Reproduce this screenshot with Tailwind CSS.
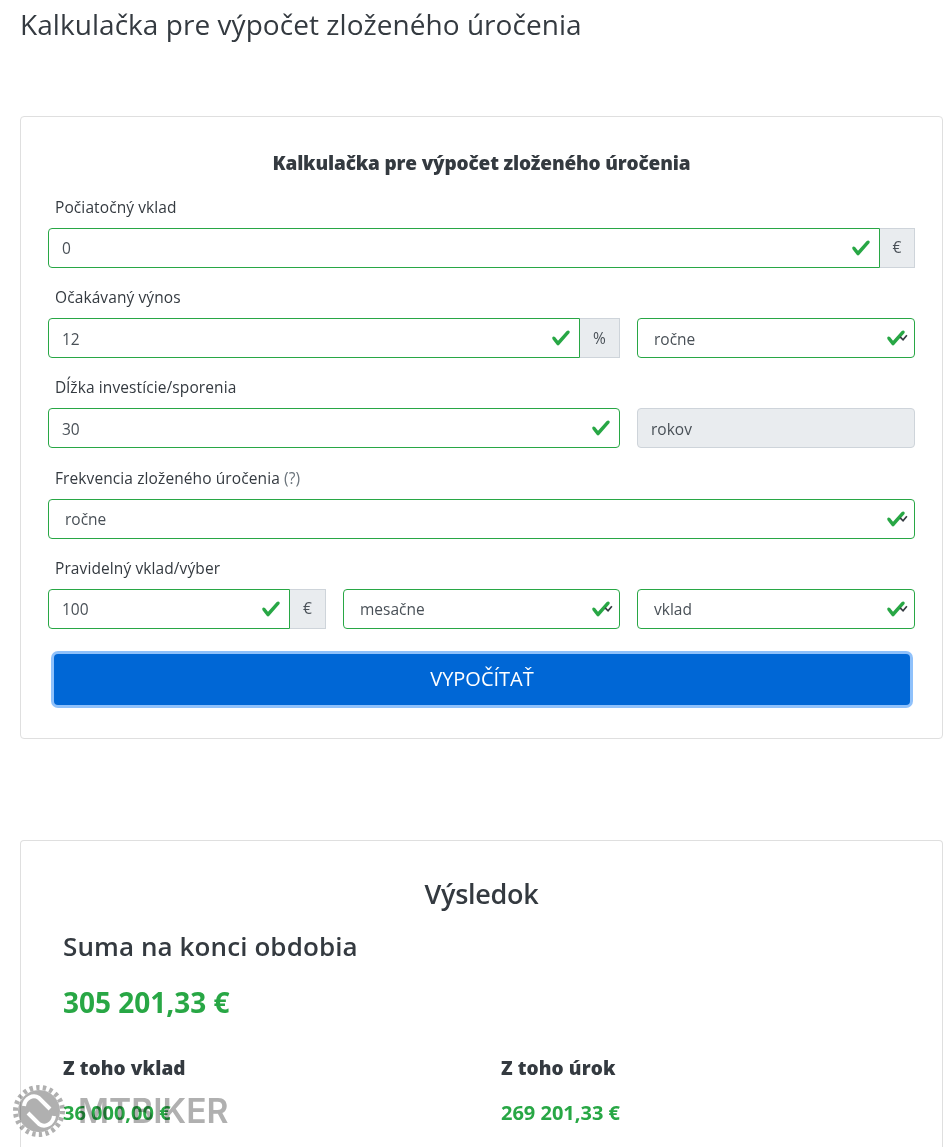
<!DOCTYPE html>
<html lang="sk">
<head>
  <meta charset="UTF-8">
  <meta name="viewport" content="width=device-width, initial-scale=1.0">
  <title>Kalkulačka pre výpočet zloženého úročenia</title>
  <script src="https://cdn.jsdelivr.net/npm/@tailwindcss/browser@4"></script>
</head>
<body class="relative h-[1148px] overflow-hidden bg-white pl-[20px] pr-px font-['Open_Sans','Noto_Sans',sans-serif] text-[#343a40]">
  <svg class="hidden">
    <symbol id="check" viewBox="0 0 8 8"><path fill="#28a745" d="M2.3 6.73L.6 4.53c-.4-1.04.46-1.4 1.1-.8l1.1 1.4 3.4-3.8c.6-.63 1.6-.27 1.2.7l-4 4.6c-.43.5-.8.4-1.1.1z"/></symbol>
    <symbol id="caret" viewBox="0 0 8 6"><path fill="none" stroke="#343a40" stroke-width="1.5" d="M1 2.5l2.6 2.5L7 1"/></symbol>
  </svg>

  <h1 class="h-[116px] pt-[4px] text-[28px] leading-[40px] font-normal tracking-[0.05px]">Kalkulačka pre výpočet zloženého úročenia</h1>

  <!-- formular -->
  <section class="h-[623px] rounded border border-[#dfdfdf] px-[27px] pt-[32px]">
    <h2 class="text-center text-[19px] leading-[28.75px] font-extrabold tracking-[-0.17px]">Kalkulačka pre výpočet zloženého úročenia</h2>

    <div class="flex h-[50.2px] items-end pb-[9px] pl-[7px] text-[15.5px] leading-[24px] tracking-[0.1px]">Počiatočný vklad</div>
    <div class="flex h-[40px]">
      <div class="flex flex-1 items-center justify-between rounded-l border border-[#28a745] pr-[8px] pl-[13px] text-[15.5px] text-[#495057]">
        <span class="pt-[2px]">0</span>
        <svg class="h-[20px] w-[20px]"><use href="#check"/></svg>
      </div>
      <div class="flex w-[35px] items-center justify-center border border-l-0 border-[#ced4da] bg-[#e9ecef] text-[15.5px] text-[#495057]">€</div>
    </div>

    <div class="flex h-[50.2px] items-end pb-[9px] pl-[7px] text-[15.5px] leading-[24px] tracking-[0.1px]">Očakávaný výnos</div>
    <div class="grid h-[40px] grid-cols-[572px_278px] gap-x-[17px]">
      <div class="flex">
        <div class="flex flex-1 items-center justify-between rounded-l border border-[#28a745] pr-[8px] pl-[13px] text-[15.5px] text-[#495057]">
          <span class="pt-[2px]">12</span>
          <svg class="h-[20px] w-[20px]"><use href="#check"/></svg>
        </div>
        <div class="flex w-[40px] items-center justify-center border border-l-0 border-[#ced4da] bg-[#e9ecef] text-[15.5px] text-[#495057]">%</div>
      </div>
      <div class="relative flex items-center rounded border border-[#28a745] pl-[16px] text-[15.5px] text-[#495057]">
        <span class="pt-[2px]">ročne</span>
        <svg class="absolute top-[9px] right-[8px] h-[20px] w-[20px]"><use href="#check"/></svg>
        <svg class="absolute top-[15px] right-[6px] h-[7px] w-[9px]"><use href="#caret"/></svg>
      </div>
    </div>

    <div class="flex h-[50.2px] items-end pb-[9px] pl-[7px] text-[15.5px] leading-[24px] tracking-[0.1px]">Dĺžka investície/sporenia</div>
    <div class="grid h-[40px] grid-cols-[572px_278px] gap-x-[17px]">
      <div class="flex items-center justify-between rounded border border-[#28a745] pr-[8px] pl-[13px] text-[15.5px] text-[#495057]">
        <span class="pt-[2px]">30</span>
        <svg class="h-[20px] w-[20px]"><use href="#check"/></svg>
      </div>
      <div class="flex items-center rounded border border-[#ced4da] bg-[#e9ecef] pl-[13px] text-[15.5px] text-[#495057]"><span class="pt-[2px]">rokov</span></div>
    </div>

    <div class="flex h-[50.2px] items-end pb-[9px] pl-[7px] text-[15.5px] leading-[24px] tracking-[0.1px]">Frekvencia zloženého úročenia&nbsp;<span class="text-[#6c757d]">(?)</span></div>
    <div class="relative flex h-[40px] items-center rounded border border-[#28a745] pl-[16px] text-[15.5px] text-[#495057]">
      <span class="pt-[2px]">ročne</span>
      <svg class="absolute top-[9px] right-[8px] h-[20px] w-[20px]"><use href="#check"/></svg>
      <svg class="absolute top-[15px] right-[6px] h-[7px] w-[9px]"><use href="#caret"/></svg>
    </div>

    <div class="flex h-[50.2px] items-end pb-[9px] pl-[7px] text-[15.5px] leading-[24px] tracking-[0.1px]">Pravidelný vklad/výber</div>
    <div class="grid h-[40px] grid-cols-[278px_277px_278px] gap-x-[17px]">
      <div class="flex">
        <div class="flex flex-1 items-center justify-between rounded-l border border-[#28a745] pr-[8px] pl-[13px] text-[15.5px] text-[#495057]">
          <span class="pt-[2px]">100</span>
          <svg class="h-[20px] w-[20px]"><use href="#check"/></svg>
        </div>
        <div class="flex w-[36px] items-center justify-center border border-l-0 border-[#ced4da] bg-[#e9ecef] text-[15.5px] text-[#495057]">€</div>
      </div>
      <div class="relative flex items-center rounded border border-[#28a745] pl-[16px] text-[15.5px] text-[#495057]">
        <span class="pt-[2px]">mesačne</span>
        <svg class="absolute top-[9px] right-[8px] h-[20px] w-[20px]"><use href="#check"/></svg>
        <svg class="absolute top-[15px] right-[6px] h-[7px] w-[9px]"><use href="#caret"/></svg>
      </div>
      <div class="relative flex items-center rounded border border-[#28a745] pl-[16px] text-[15.5px] text-[#495057]">
        <span class="pt-[2px]">vklad</span>
        <svg class="absolute top-[9px] right-[8px] h-[20px] w-[20px]"><use href="#check"/></svg>
        <svg class="absolute top-[15px] right-[6px] h-[7px] w-[9px]"><use href="#caret"/></svg>
      </div>
    </div>

    <button class="mt-[25px] ml-[6px] flex h-[51px] w-[856px] items-center justify-center rounded bg-[#0067d6] text-[20px] text-white ring-[3px] ring-[#8fc1fb]">VYPOČÍTAŤ</button>
  </section>

  <!-- vysledok -->
  <section class="mt-[101px] h-[307px] rounded-t border border-b-0 border-[#dfdfdf] pt-[33px] pl-[42px]">
    <h2 class="pr-[42px] text-center text-[27px] leading-[40px] font-semibold tracking-[-0.3px]">Výsledok</h2>
    <div class="mt-[12px] text-[26px] leading-[40px] font-semibold tracking-[0.1px]">Suma na konci obdobia</div>
    <div class="mt-[16px] text-[28px] leading-[40px] font-bold text-[#28a745]">305 201,33 €</div>
    <div class="mt-[33px] grid grid-cols-[438px_1fr]">
      <div>
        <div class="text-[19px] leading-[27px] font-extrabold tracking-[0.1px]">Z toho vklad</div>
        <div class="mt-[17px] text-[20px] leading-[27px] font-bold text-[#28a745]">36 000,00 €</div>
      </div>
      <div>
        <div class="text-[19px] leading-[27px] font-extrabold tracking-[0.1px]">Z toho úrok</div>
        <div class="mt-[17px] text-[20px] leading-[27px] font-bold text-[#28a745]">269 201,33 €</div>
      </div>
    </div>
  </section>

  <!-- watermark -->
  <div class="absolute top-[1085px] left-[13px] flex items-center mix-blend-multiply">
    <svg class="h-[52px] w-[52px]" viewBox="-26 -26 52 52">
      <circle r="21" fill="#b0b0b0"/>
      <circle r="23.5" fill="none" stroke="#b0b0b0" stroke-width="5" stroke-dasharray="3.35 3.35"/>
      <path fill="none" stroke="#fff" stroke-width="4" d="M-15-5C-14-13-6-17 0-13L11-2"/>
      <path fill="none" stroke="#fff" stroke-width="4" d="M15 5C14 13 6 17 0 13L-11 2"/>
    </svg>
    <span class="ml-[13px] font-['Inter',sans-serif] text-[33.6px] leading-[40px] font-semibold text-[#b0b0b0]">MTBIKER</span>
  </div>
</body>
</html>
